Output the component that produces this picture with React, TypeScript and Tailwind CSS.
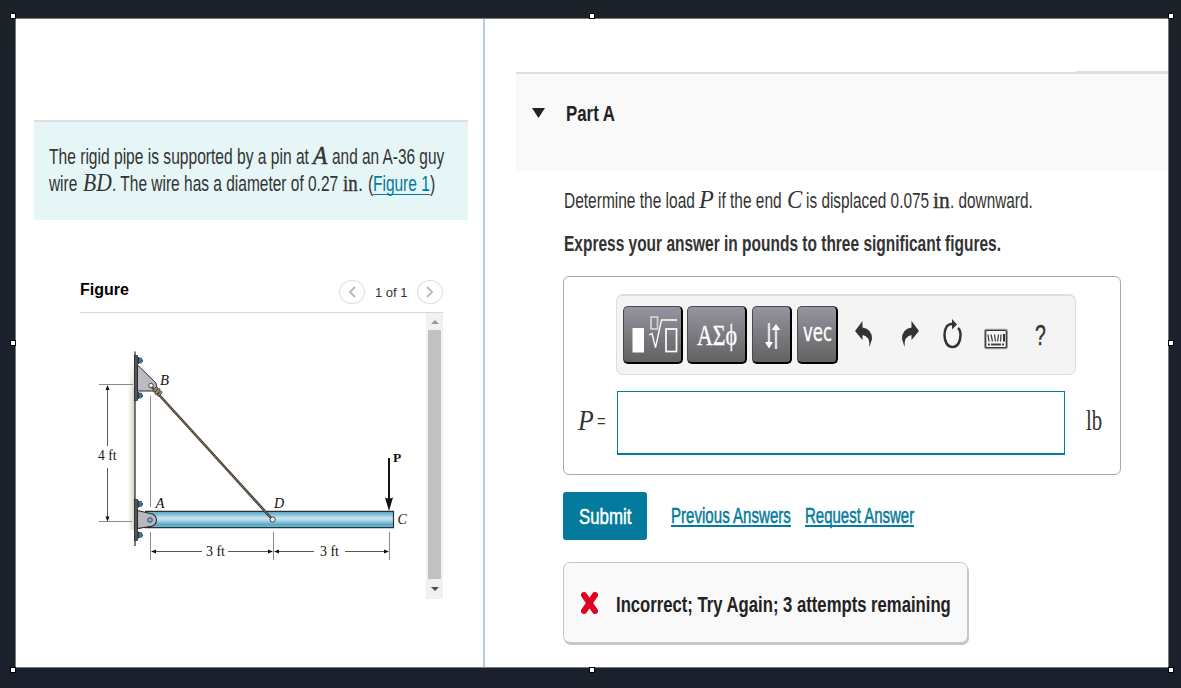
import { useLayoutEffect, useRef, type ReactNode } from "react";

/** Condenses or stretches one run of text so that it fills the width of its box. */
function Fit({ className = "", children }: { className?: string; children: ReactNode }) {
  const outer = useRef<HTMLSpanElement>(null);
  const inner = useRef<HTMLSpanElement>(null);
  useLayoutEffect(() => {
    const o = outer.current;
    const i = inner.current;
    if (o && i) i.style.transform = `scaleX(${o.clientWidth / i.offsetWidth})`;
  });
  return (
    <span ref={outer} className={`block shrink-0 whitespace-nowrap ${className}`}>
      <span ref={inner} className="inline-block w-max origin-left">
        {children}
      </span>
    </span>
  );
}

const serif = "font-['Liberation_Serif',serif]";

function Handle({ className }: { className: string }) {
  return <span className={`absolute size-[6px] border border-black bg-white ${className}`} />;
}

function Bolt({ y }: { y: number }) {
  return (
    <g>
      <rect x="137" y={y - 3.5} width="2" height="7" fill="#2c4652" />
      <rect x="139" y={y - 2.5} width="2.5" height="5" fill="#3b87a6" stroke="#1e3440" strokeWidth=".6" />
      <rect x="141.5" y={y - 1} width="1.5" height="2.5" fill="#44525a" />
    </g>
  );
}

function PipeDiagram() {
  return (
    <svg className="block h-[286px] w-[346px]" viewBox="80 313 346 286" fontFamily="'Liberation Serif', serif" fontSize="14" fill="#111">
      <defs>
        <linearGradient id="pipe" x1="0" y1="0" x2="0" y2="1">
          <stop offset="0" stopColor="#4ea3c4" />
          <stop offset=".18" stopColor="#78bcd6" />
          <stop offset=".42" stopColor="#cfe3f2" />
          <stop offset=".55" stopColor="#b2d7e9" />
          <stop offset=".8" stopColor="#53a9c9" />
          <stop offset="1" stopColor="#79bcd4" />
        </linearGradient>
        <linearGradient id="wall">
          <stop offset="0" stopColor="#e4e4d8" stopOpacity="0" />
          <stop offset="1" stopColor="#c9c9b8" />
        </linearGradient>
        <linearGradient id="fade" x1="0" y1="0" x2="0" y2="1">
          <stop offset="0" stopColor="#fff" />
          <stop offset="1" stopColor="#fff" stopOpacity="0" />
        </linearGradient>
      </defs>
      <rect x="127" y="360" width="8" height="170" fill="url(#wall)" />
      <rect x="127" y="358" width="7" height="35" fill="url(#fade)" />
      <g stroke="#8a8a8a" strokeWidth="1" fill="none">
        <path d="M99 384.5H133M99 521.5H132M150.5 396V507M150.5 532V560M273.5 532V560M389.5 532V560" />
      </g>
      <g stroke="#444" strokeWidth=".9" fill="none">
        <path d="M107.5 387V446M107.5 468V519M153 551.5H202M228 551.5H271M276 551.5H314M345 551.5H387" />
      </g>
      <path d="M107.5 385l-2 5h4zM107.5 521.5l-2-5h4zM151 551.5l5-2v4zM273 551.5l-5-2v4zM274 551.5l5-2v4zM389 551.5l-5-2v4z" />
      <path d="M135 351.5V546" stroke="#333" strokeWidth="1.3" />
      <rect x="134.5" y="355.5" width="3" height="45" fill="#55565a" stroke="#222" strokeWidth=".7" />
      <rect x="134.5" y="499.5" width="3" height="41" fill="#55565a" stroke="#222" strokeWidth=".7" />
      <Bolt y={360.5} />
      <Bolt y={395.5} />
      <Bolt y={504} />
      <Bolt y={535} />
      <path d="M137.5 365L156 383q2 5-1.5 8H137.5z" fill="#bbbcc3" stroke="#2b2b2b" strokeWidth="1" />
      <rect x="145" y="511" width="248.5" height="17" fill="url(#pipe)" />
      <path d="M145 511.3H393.5V527.7H145" stroke="#283235" strokeWidth="1.2" fill="none" />
      <path d="M137.5 510.5L150 513.5a6.5 6.5 0 0 1 0 13L137.5 528.5z" fill="#b8b9c0" stroke="#292929" strokeWidth="1.1" />
      <circle cx="150" cy="520" r="2.3" fill="#73bbda" stroke="#253b44" strokeWidth=".9" />
      <path d="M151 386L272 519" stroke="#40382d" strokeWidth="2.5" />
      <path d="M151 386L272 519" stroke="#a4967f" strokeWidth="1" strokeDasharray="1.5 .7" />
      <g fill="#9b8d77" stroke="#3c3429" strokeWidth=".8">
        <ellipse cx="155.5" cy="389.5" rx="1.5" ry="3" transform="rotate(40 155.5 389.5)" />
        <ellipse cx="157.5" cy="391.5" rx="1.5" ry="3.5" transform="rotate(40 157.5 391.5)" />
        <ellipse cx="159.7" cy="393.7" rx="1.2" ry="3" transform="rotate(40 159.7 393.7)" />
      </g>
      <circle cx="151" cy="385.5" r="2.3" fill="#eee" stroke="#4b423b" strokeWidth="1" />
      <circle cx="272.7" cy="519.5" r="2.6" fill="#eee" stroke="#4b423b" strokeWidth="1" />
      <path d="M389 458V501" stroke="#111" strokeWidth="2" />
      <path d="M385 497.5q4 2 8 0L389 511z" />
      <text x="98" y="459.5" textLength="18.5" lengthAdjust="spacingAndGlyphs">4 ft</text>
      <text x="206" y="556" textLength="19" lengthAdjust="spacingAndGlyphs">3 ft</text>
      <text x="320" y="556" textLength="19" lengthAdjust="spacingAndGlyphs">3 ft</text>
      <g fontStyle="italic">
        <text x="160" y="385" textLength="9" lengthAdjust="spacingAndGlyphs">B</text>
        <text x="155.5" y="508" textLength="9" lengthAdjust="spacingAndGlyphs">A</text>
        <text x="274" y="508">D</text>
        <text x="397.5" y="524">C</text>
      </g>
      <text x="393" y="462" fontWeight="bold" fontSize="13.5">P</text>
    </svg>
  );
}

function PagerButton({ d }: { d: string }) {
  return (
    <button className="flex h-6 w-[26px] items-center justify-center rounded-[50%] border border-[#dedede] bg-white">
      <svg className="h-3 w-2" viewBox="0 0 8 12" fill="none" stroke="#bbb" strokeWidth="2">
        <path d={d} />
      </svg>
    </button>
  );
}

function LeftPane() {
  return (
    <section className="h-full w-[467px] shrink-0 pt-[101px]">
      <div className="ml-[18px] h-[100px] w-[434px] border-t-2 border-[#dedede] bg-[#e6f6f7] pt-5 pl-[15px] text-[22px] leading-[27px] text-[#333]">
        <div className="flex items-baseline">
          <Fit className="w-[260px]">The rigid pipe is supported by a pin at</Fit>
          <Fit className={`ml-1 w-[14px] text-[25px] leading-[27px] italic [-webkit-text-stroke:0.5px] ${serif}`}>A</Fit>
          <Fit className="ml-[5px] w-[112px]">and an A-36 guy</Fit>
        </div>
        <div className="-mt-px flex items-baseline">
          <Fit className="w-[28px]">wire</Fit>
          <Fit className={`ml-[6px] w-[29px] text-[26px] leading-[27px] italic ${serif}`}>BD</Fit>
          <Fit className="w-[226px]">. The wire has a diameter of 0.27</Fit>
          <Fit className={`ml-[5px] w-[15px] text-[24px] leading-[27px] [-webkit-text-stroke:0.4px] ${serif}`}>in</Fit>
          <Fit className="w-[5px]">.</Fit>
          <Fit className="ml-[5px] w-[5px]">(</Fit>
          <a className="text-[#047a9c]">
            <Fit className="w-[57px] border-b border-[#047a9c] !leading-[20px]">Figure 1</Fit>
          </a>
          <Fit className="w-[5px]">)</Fit>
        </div>
      </div>

      <div className="mt-[60px] ml-16 flex h-8 w-[363px] justify-between">
        <h2 className="text-[16px] leading-[19px] font-bold text-black">
          <Fit className="w-[49px]">Figure</Fit>
        </h2>
        <div className="flex h-6">
          <PagerButton d="M7 1L2 6l5 5" />
          <Fit className="ml-[10px] w-[33px] pt-1 text-[13px] leading-[18px] text-[#333]">1 of 1</Fit>
          <div className="ml-[9px]">
            <PagerButton d="M1 1l5 5-5 5" />
          </div>
        </div>
      </div>
      <div className="ml-16 flex h-[287px] w-[363px] border-t border-[#d8d8d8]">
        <PipeDiagram />
        <div className="flex w-[17px] flex-col items-center bg-[#f1f1f1]">
          <div className="flex h-[17px] items-center">
            <svg className="h-1 w-2" viewBox="0 0 8 4"><path d="M0 4L4 0l4 4z" fill="#999" /></svg>
          </div>
          <div className="h-[249px] w-[13px] bg-[#c1c1c1]" />
          <div className="flex h-5 items-center">
            <svg className="h-1 w-2" viewBox="0 0 8 4"><path d="M0 0L4 4l4-4z" fill="#505050" /></svg>
          </div>
        </div>
      </div>
    </section>
  );
}

const keyClass =
  "flex h-[58px] shrink-0 items-center justify-center rounded-[5px] border border-r-2 border-b-2 border-[#4a4a4a] border-r-black border-b-black bg-linear-to-b from-[#9694a0] to-[#626262] text-white";

function Toolbar() {
  return (
    <div className="ml-[52px] flex h-[81px] w-[460px] rounded-[7px] border border-t-2 border-[#dedede] bg-[#f4f4f4] pt-[10px] pl-[6px]">
      <button className={`${keyClass} w-[60px]`}>
        <svg className="h-[58px] w-[60px] shrink-0" viewBox="0 0 60 58" fill="none" stroke="white">
          <rect x="9.5" y="22" width="11.5" height="24.5" fill="white" stroke="none" />
          <rect x="28" y="11" width="6.5" height="12" stroke="#d0d0d3" strokeWidth="1.8" />
          <path d="M26 29l3-1.5 3.5 14L38.5 14H54" strokeWidth="1.3" />
          <rect x="43" y="23" width="10.5" height="22.5" strokeWidth="1.7" />
        </svg>
      </button>
      <button className={`${keyClass} ml-1 w-[60px] text-[29px] leading-[52px] ${serif}`}>
        <Fit className="w-[40px] [-webkit-text-stroke:0.3px]">ΑΣϕ</Fit>
      </button>
      <button className={`${keyClass} ml-[5px] w-[40px]`}>
        <svg className="h-[58px] w-[40px] shrink-0" viewBox="0 0 40 58" fill="none" stroke="#e2e2e5" strokeWidth="2.4">
          <path d="M17 17V38M24 43V21" />
          <path d="M13 36l4 6.500 4-6.500zM19.500 24L24 18l4.500 6z" fill="white" stroke="none" />
        </svg>
      </button>
      <button className={`${keyClass} ml-[5px] w-[41px] font-['DejaVu_Sans',sans-serif] text-[24px] leading-[50px]`}>
        <Fit className="w-[29px] pb-1 [-webkit-text-stroke:0.3px]">vec</Fit>
      </button>
      <svg className="mt-[15px] ml-[17px] h-[27px] w-[18px] shrink-0" viewBox="0 0 18 27" fill="#333">
        <path d="M0 10L7.500 0v6.500Q17 8 17 18l-2.500 8Q15 15 7.500 14v5z" />
      </svg>
      <svg className="mt-[15px] ml-[28px] h-[27px] w-[18px] shrink-0" viewBox="0 0 18 27" fill="#333">
        <path d="M18 10L10.500 0v6.500Q1 8 1 18l2.500 8Q3 15 10.500 14v5z" />
      </svg>
      <svg className="mt-[13px] ml-[24px] h-[30px] w-[19px] shrink-0" viewBox="0 0 19 30" fill="none">
        <path d="M10 5C4 4 1.500 10 1.500 16S4 28 9.500 28 17.500 22 17.500 16q0-5-2.500-7" stroke="#333" strokeWidth="2.500" />
        <path d="M9 0l5 5.500-5 5z" fill="#333" />
      </svg>
      <svg className="mt-[22px] ml-[22px] h-[22px] w-[24px] shrink-0" viewBox="0 0 24 22" fill="none">
        <rect x=".8" y="1.500" width="22.400" height="19" rx="1.500" stroke="#999" strokeWidth="1.500" />
        <rect x="1.700" y="2.500" width="20.600" height="17" rx="1" fill="#f8f8f8" stroke="#333" strokeWidth="1.200" />
        <path d="M4 6.500l1 7M7 6.500l1.500 7M10.500 6.500l1 7M14.500 6.500l-1 7M17 6.500l-.500 7" stroke="#444" strokeWidth="1.300" />
        <path d="M20 6V13.500" stroke="#333" strokeWidth="2" />
        <path d="M4 16.500H6M7 16.500H17M18 16.500H20" stroke="#444" strokeWidth="2" />
      </svg>
      <Fit className="ml-[27px] w-[11px] pt-[10px] text-[30px] leading-[38px] text-[#333] [-webkit-text-stroke:0.4px]">?</Fit>
    </div>
  );
}

function RightPane() {
  return (
    <section className="h-full min-w-0 flex-1 pt-[52px]">
      <div className="ml-[31px] flex flex-col">
        <div className="flex h-[3px] items-end">
          <div className="h-[2px] w-[560px] bg-[#dedede]" />
          <div className="h-[3px] flex-1 bg-[#dedede]" />
        </div>
        <header className="flex h-[97px] bg-[#f9f9f9] pt-[26px] pl-4">
          <svg className="mt-2 h-[10px] w-[13px]" viewBox="0 0 13 10"><path d="M0 0H13L6.500 10z" fill="#222" /></svg>
          <h1 className="ml-[21px] text-[22px] leading-[27px] font-bold text-[#222]">
            <Fit className="w-[49px]">Part A</Fit>
          </h1>
        </header>
      </div>

      <div className="pl-[78px]">
        <p className="mt-[15px] ml-px flex h-[27px] items-baseline text-[22px] leading-[27px] text-[#333]">
          <Fit className="w-[131px]">Determine the load</Fit>
          <Fit className={`ml-1 w-[15px] text-[26px] leading-[27px] italic ${serif}`}>P</Fit>
          <Fit className="ml-1 w-[64px]">if the end</Fit>
          <Fit className={`ml-[5px] w-[15px] text-[26px] leading-[27px] italic ${serif}`}>C</Fit>
          <Fit className="ml-1 w-[123px]">is displaced 0.075</Fit>
          <Fit className={`ml-1 w-[17px] text-[24px] leading-[27px] [-webkit-text-stroke:0.5px] ${serif}`}>in</Fit>
          <Fit className="w-[83px]">. downward.</Fit>
        </p>
        <p className="mt-[17px] ml-px text-[22px] leading-[27px] font-bold text-[#333]">
          <Fit className="w-[437px]">Express your answer in pounds to three significant figures.</Fit>
        </p>

        <div className="mt-[19px] h-[199px] w-[558px] rounded-[6px] border border-[#aaa] pt-[17px]">
          <Toolbar />
          <div className="mt-4 flex h-16 text-[#333]">
            <Fit className={`ml-[14px] w-[16px] text-[29px] leading-[58px] italic ${serif}`}>P</Fit>
            <Fit className="ml-[3px] w-[9px] text-[18px] leading-[60px]">=</Fit>
            <input className="ml-[11px] h-16 w-[448px] border border-b-2 border-[#047a9c] bg-white outline-none" />
            <Fit className={`ml-[21px] w-[16px] text-[30px] leading-[58px] ${serif}`}>lb</Fit>
          </div>
        </div>

        <div className="mt-[17px] flex h-12 text-[22px] leading-[47px]">
          <button className="w-[84px] rounded-[3px] bg-[#047a9c] pl-4 text-left leading-[49px] text-white">
            <Fit className="w-[52px] [-webkit-text-stroke:0.5px]">Submit</Fit>
          </button>
          <a className="mt-[11px] ml-6 h-[24px] border-b-2 border-[#047a9c] leading-[25px] text-[#047a9c]">
            <Fit className="w-[120px] [-webkit-text-stroke:0.5px]">Previous Answers</Fit>
          </a>
          <a className="mt-[11px] ml-[14px] h-[24px] border-b-2 border-[#047a9c] leading-[25px] text-[#047a9c]">
            <Fit className="w-[109px] [-webkit-text-stroke:0.5px]">Request Answer</Fit>
          </a>
        </div>

        <div className="mt-[22px] flex h-[81px] w-[405px] rounded-[7px] border border-[#c8c8c8] bg-[#f9f9f9] pl-[17px] shadow-[1px_2px_0_#c6c6c6]">
          <svg className="mt-[29px] h-[22px] w-[17px]" viewBox="0 0 17 22">
            <path d="M3 3l11 16M14 3L3 19" stroke="#e1001f" strokeWidth="6" strokeLinecap="round" />
          </svg>
          <Fit className="ml-[18px] w-[335px] pt-[28px] text-[22px] leading-[27px] font-bold text-[#222]">
            Incorrect; Try Again; 3 attempts remaining
          </Fit>
        </div>
      </div>
    </section>
  );
}

export default function App() {
  return (
    <div className="relative h-[688px] w-[1181px] overflow-hidden bg-linear-to-b from-[#1b222a] to-[#1b202d] pt-[18px] pl-[15px] font-['Liberation_Sans',sans-serif]">
      <main className="flex h-[650px] w-[1154px] overflow-hidden border border-[#77797d] bg-white">
        <LeftPane />
        <div className="w-[2px] shrink-0 bg-[#b9cbdc]" />
        <RightPane />
      </main>
      <Handle className="top-[13px] left-[10px]" />
      <Handle className="top-[13px] left-[589px]" />
      <Handle className="top-[13px] left-[1168px]" />
      <Handle className="top-[340px] left-[10px]" />
      <Handle className="top-[340px] left-[1168px]" />
      <Handle className="top-[667px] left-[10px]" />
      <Handle className="top-[667px] left-[589px]" />
      <Handle className="top-[667px] left-[1168px]" />
    </div>
  );
}
